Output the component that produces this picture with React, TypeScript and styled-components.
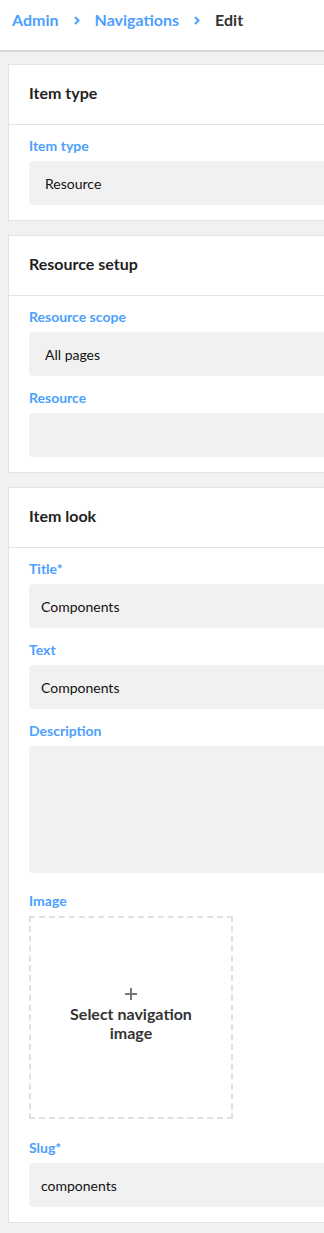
import React from "react";
import styled, { createGlobalStyle } from "styled-components";

const GlobalStyle = createGlobalStyle`
  html, body {
    margin: 0;
    padding: 0;
    background: #f1f1f1;
    overflow-x: hidden;
  }
  * {
    box-sizing: border-box;
  }
  body {
    font-family: Lato, "Liberation Sans", sans-serif;
    color: #222222;
  }
`;

// *Top bar
const TopBar = styled.header`
  height: 52px;
  background: #ffffff;
  border-bottom: 2px solid #d9d9d9;
  display: flex;
  align-items: center;
  padding: 0 0 12px 12px;
  gap: 15px;
  font-size: 16px;
  font-weight: 700;
`;

const Crumb = styled.span<{ $active?: boolean }>`
  color: ${(p) => (p.$active ? "#333333" : "#4c9ffe")};
  white-space: nowrap;
`;

const ChevronSvg = styled.svg`
  margin-top: 3px;
  flex-shrink: 0;
`;

const Chevron = () => (
  <ChevronSvg width="6" height="9" viewBox="0 0 6 9">
    <path d="M1 1 L4.5 4.5 L1 8" fill="none" stroke="#4c9ffe" strokeWidth="2" />
  </ChevronSvg>
);

const Main = styled.main`
  padding: 12px 0 10px 8px;
  display: flex;
  flex-direction: column;
  gap: 14px;
`;

const Card = styled.section`
  width: 380px;
  background: #ffffff;
  border: 1px solid #e3e3e3;
`;

const CardHead = styled.div`
  height: 60px;
  border-bottom: 1px solid #e3e3e3;
  display: flex;
  align-items: center;
  padding: 0 20px 4px;
  font-size: 16px;
  font-weight: 700;
  color: #1f1f1f;
`;

const CardBody = styled.div`
  padding: 13px 20px 15px;
  display: flex;
  flex-direction: column;
  gap: 14px;
`;

const Field = styled.div<{ $extra?: number }>`
  display: flex;
  flex-direction: column;
  margin-top: ${(p) => p.$extra ?? 0}px;
`;

const Label = styled.label`
  display: block;
  font-size: 14px;
  line-height: 16px;
  font-weight: 700;
  color: #4c9ffe;
  margin-bottom: 7px;
`;

const Input = styled.div<{ $select?: boolean }>`
  height: 44px;
  background: #f1f1f1;
  border-radius: 4px;
  display: flex;
  align-items: center;
  padding-left: ${(p) => (p.$select ? 16 : 12)}px;
  font-size: 14px;
  color: #111111;
`;

const TextArea = styled.div`
  height: 127px;
  background: #f1f1f1;
  border-radius: 4px;
`;

const ImageBox = styled.div`
  width: 204px;
  height: 203px;
  border: 2px dashed #e0e0e0;
  display: flex;
  flex-direction: column;
  align-items: center;
  justify-content: center;
  text-align: center;
  font-size: 16px;
  line-height: 19px;
  font-weight: 700;
  color: #333333;
  padding-bottom: 6px;
`;

const PlusSvg = styled.svg`
  display: block;
  margin-bottom: 4px;
`;

const PlusIcon = () => (
  <PlusSvg width="12" height="12" viewBox="0 0 12 12">
    <path d="M6 0 V12 M0 6 H12" stroke="#777777" strokeWidth="2" />
  </PlusSvg>
);

const App = () => {
  return (
    <>
      <GlobalStyle />
      <TopBar>
        <Crumb>Admin</Crumb>
        <Chevron />
        <Crumb>Navigations</Crumb>
        <Chevron />
        <Crumb $active>Edit</Crumb>
      </TopBar>
      <Main>
        <Card>
          <CardHead>Item type</CardHead>
          <CardBody>
            <Field>
              <Label>Item type</Label>
              <Input $select>Resource</Input>
            </Field>
          </CardBody>
        </Card>
        <Card>
          <CardHead>Resource setup</CardHead>
          <CardBody>
            <Field>
              <Label>Resource scope</Label>
              <Input $select>All pages</Input>
            </Field>
            <Field>
              <Label>Resource</Label>
              <Input $select />
            </Field>
          </CardBody>
        </Card>
        <Card>
          <CardHead>Item look</CardHead>
          <CardBody>
            <Field>
              <Label>Title*</Label>
              <Input>Components</Input>
            </Field>
            <Field>
              <Label>Text</Label>
              <Input>Components</Input>
            </Field>
            <Field>
              <Label>Description</Label>
              <TextArea />
            </Field>
            <Field $extra={6}>
              <Label>Image</Label>
              <ImageBox>
                <PlusIcon />
                <div>
                  Select navigation
                  <br />
                  image
                </div>
              </ImageBox>
            </Field>
            <Field $extra={7}>
              <Label>Slug*</Label>
              <Input>components</Input>
            </Field>
          </CardBody>
        </Card>
      </Main>
    </>
  );
};

export default App;
